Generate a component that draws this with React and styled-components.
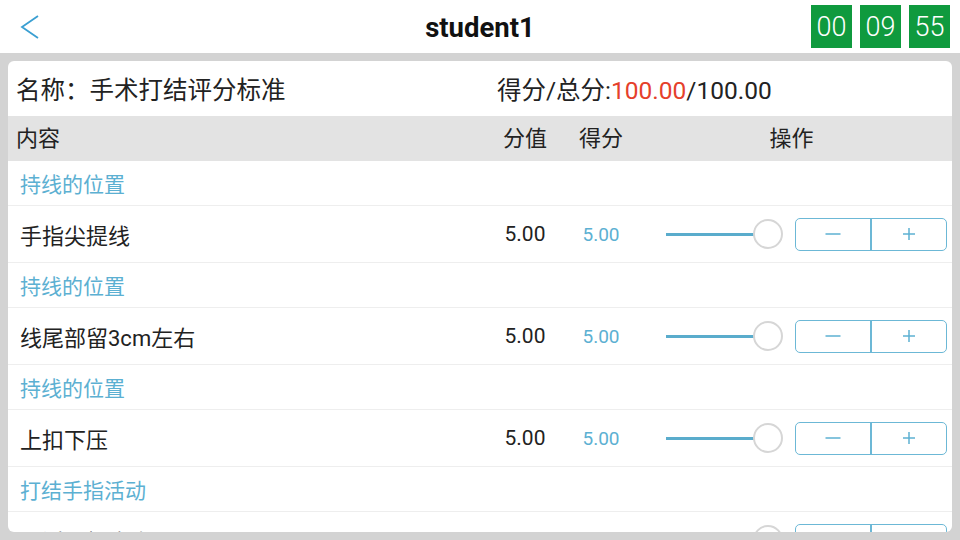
import styled, { createGlobalStyle } from "styled-components"

const GlobalStyle = createGlobalStyle`
    html, body {
        margin: 0;
        padding: 0;
        background: #d3d3d3;
    }
    body {
        font-family: Roboto, "Noto Sans CJK SC", sans-serif;
        color: #222;
    }
`

const Page = styled.div`
    width: 960px;
    height: 540px;
    display: flex;
    flex-direction: column;
    overflow: hidden;
`

const TopBar = styled.div`
    height: 53px;
    flex-shrink: 0;
    background: #fff;
    display: grid;
    grid-template-columns: 1fr auto 1fr;
    align-items: center;
    padding: 0 10px;
`

const Back = styled.div`
    display: flex;
    align-items: center;
    padding-left: 9px;
    color: #3a9fd2;
`

const Title = styled.h1`
    margin: 0;
    font-size: 27.5px;
    font-weight: 700;
    color: #111;
    line-height: 1;
    padding-top: 2px;
`

const Timer = styled.div`
    display: flex;
    justify-content: flex-end;
    gap: 8px;
`

const TimeBox = styled.div`
    width: 41px;
    height: 43px;
    background: #0f9a3e;
    color: #fff;
    font-size: 27px;
    font-weight: 300;
    display: flex;
    align-items: center;
    justify-content: center;
    font-family: Roboto, sans-serif;
`

/* gray area round the sheet */
const Body = styled.div`
    flex: 1;
    min-height: 0;
    padding: 8px;
`

const Card = styled.div`
    height: 100%;
    background: #fff;
    border-radius: 6px;
    overflow: hidden;
`

const Grid = styled.div`
    display: grid;
    grid-template-columns: 479px 76px 76px 313px;
    align-items: center;
`

const NameRow = styled(Grid)`
    height: 55px;
    font-size: 24.5px;
    line-height: 1;
    padding-top: 6px;
    box-sizing: border-box;
`

const Name = styled.div`
    padding-left: 8px;
`

const Total = styled.div`
    grid-column: 2 / 5;
    padding-left: 10px;
    span { color: #e5402b; }
`

const HeadRow = styled(Grid)`
    height: 45px;
    background: #e3e3e3;
    font-size: 22px;
    line-height: 1;
`

const HeadCell = styled.div`
    text-align: ${p => p.$left ? "left" : "center"};
    padding-left: ${p => p.$left ? "8px" : "0"};
    padding-right: ${p => p.$ops ? "8px" : "0"};
`

const CatRow = styled.div`
    height: 44px;
    border-bottom: 1px solid #eeeeee;
    display: flex;
    align-items: center;
    padding-left: 12px;
    font-size: 21px;
    color: #5cb0d2;
`

const ItemRow = styled(Grid)`
    height: 56px;
    border-bottom: 1px solid #eeeeee;
`

const ItemName = styled.div`
    padding-left: 12px;
    font-size: 22px;
    color: #222;
`

const Value = styled.div`
    text-align: center;
    font-size: ${p => p.$blue ? "19px" : "21px"};
    color: ${p => p.$blue ? "#5cb0d2" : "#222"};
    font-family: Roboto, sans-serif;
`

const Ops = styled.div`
    display: flex;
    align-items: center;
    padding-left: 27px;
    gap: 12px;
`

const Slider = styled.div`
    width: 117px;
    height: 30px;
    display: flex;
    align-items: center;
    position: relative;
`

const Track = styled.div`
    flex: 1;
    height: 3px;
    background: #5aaccc;
    margin-right: 15px;
`

const Thumb = styled.div`
    position: absolute;
    right: 0;
    top: 0;
    width: 30px;
    height: 30px;
    border-radius: 50%;
    background: #fff;
    border: 2px solid #d6d6d6;
    box-sizing: border-box;
`

const Stepper = styled.div`
    width: 152px;
    height: 33px;
    display: flex;
    border: 1.5px solid #6cb8d6;
    border-radius: 5px;
    box-sizing: border-box;
`

const StepButton = styled.button`
    flex: 1;
    border: none;
    background: transparent;
    color: #5cb0d2;
    padding: 0;
    display: flex;
    align-items: center;
    justify-content: center;
    cursor: pointer;
    & + & { border-left: 2.5px solid #6cb8d6; }
`

const MinusIcon = () => (
    <svg width="16" height="16" viewBox="0 0 16 16">
        <line x1="0.5" y1="8" x2="15.5" y2="8" stroke="currentColor" strokeWidth="1.5" />
    </svg>
)

const PlusIcon = () => (
    <svg width="14" height="14" viewBox="0 0 14 14">
        <line x1="1" y1="7" x2="13" y2="7" stroke="currentColor" strokeWidth="1.5" />
        <line x1="7" y1="1" x2="7" y2="13" stroke="currentColor" strokeWidth="1.5" />
    </svg>
)

const sections = [
    { cat: "持线的位置", item: "手指尖提线" },
    { cat: "持线的位置", item: "线尾部留3cm左右" },
    { cat: "持线的位置", item: "上扣下压" },
    { cat: "打结手指活动", item: "灵活、幅度小" },
]

const App = () => {
    return (
        <Page>
            <GlobalStyle />
            <TopBar>
                <Back>
                    <svg width="22" height="26" viewBox="0 0 22 26">
                        <polyline points="19,2 3,13 19,24" fill="none" stroke="currentColor" strokeWidth="1.8" />
                    </svg>
                </Back>
                <Title>student1</Title>
                <Timer>
                    <TimeBox>00</TimeBox>
                    <TimeBox>09</TimeBox>
                    <TimeBox>55</TimeBox>
                </Timer>
            </TopBar>
            <Body>
                <Card>
                    <NameRow>
                        <Name>名称：手术打结评分标准</Name>
                        <Total>得分/总分:<span>100.00</span>/100.00</Total>
                    </NameRow>
                    <HeadRow>
                        <HeadCell $left>内容</HeadCell>
                        <HeadCell>分值</HeadCell>
                        <HeadCell>得分</HeadCell>
                        <HeadCell $ops>操作</HeadCell>
                    </HeadRow>
                    {sections.map((s, i) => (
                        <div key={i}>
                            <CatRow>{s.cat}</CatRow>
                            <ItemRow>
                                <ItemName>{s.item}</ItemName>
                                <Value>5.00</Value>
                                <Value $blue>5.00</Value>
                                <Ops>
                                    <Slider>
                                        <Track />
                                        <Thumb />
                                    </Slider>
                                    <Stepper>
                                        <StepButton><MinusIcon /></StepButton>
                                        <StepButton><PlusIcon /></StepButton>
                                    </Stepper>
                                </Ops>
                            </ItemRow>
                        </div>
                    ))}
                </Card>
            </Body>
        </Page>
    )
}

export default App
